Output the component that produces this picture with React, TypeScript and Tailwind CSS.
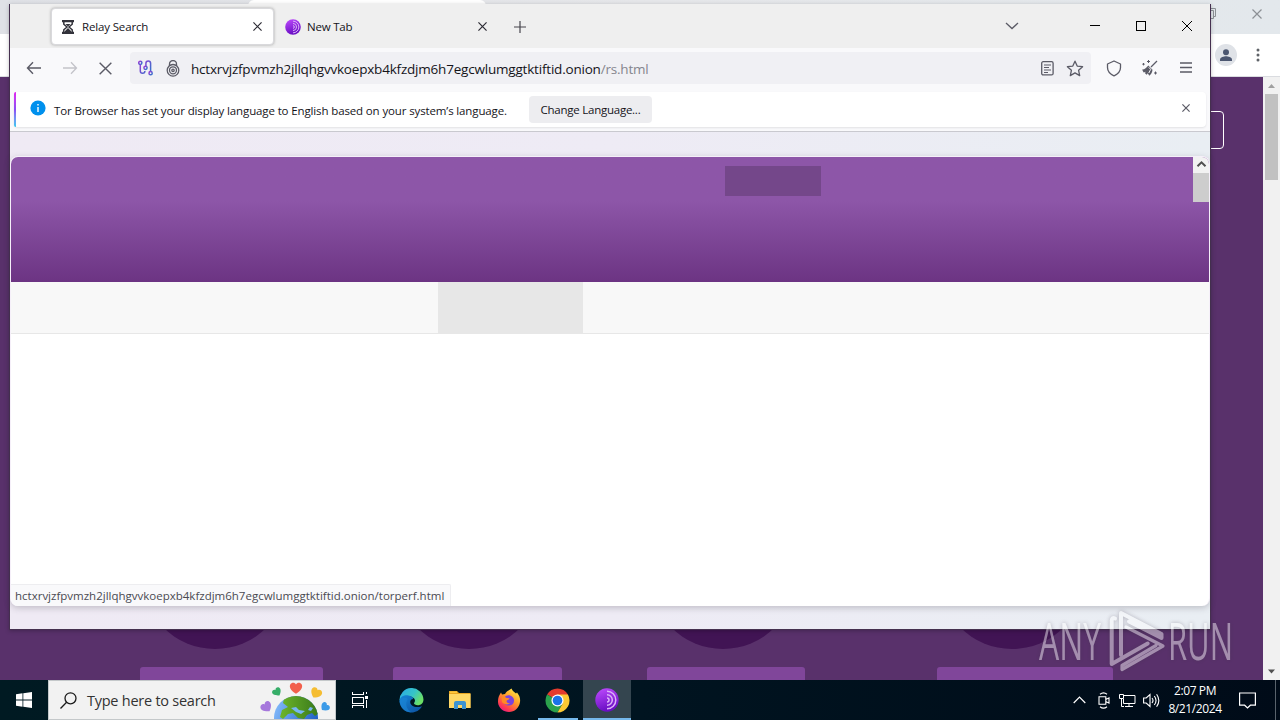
import React from "react";

function TorIcon({ size, id }: { size: number; id: string }) {
  return (
    <svg width={size} height={size} viewBox="0 0 24 24" className="block shrink-0">
      <defs>
        <linearGradient id={id} x1="0" y1="0" x2="0.3" y2="1">
          <stop offset="0" stopColor="#c04cff" />
          <stop offset="1" stopColor="#6a0fc4" />
        </linearGradient>
      </defs>
      <circle cx="12" cy="12" r="11.7" fill={`url(#${id})`} />
      <path d="M12 3.2a8.8 8.8 0 0 1 0 17.6M12 6.7a5.3 5.3 0 0 1 0 10.6M12 10a2 2 0 0 1 0 4" fill="none" stroke="#dcb2f8" strokeWidth="1.5" />
    </svg>
  );
}

function Cross({ size, color, width = 1.2 }: { size: number; color: string; width?: number }) {
  return (
    <svg width={size} height={size} viewBox="0 0 10 10" className="block shrink-0">
      <path d="M.5.5l9 9M9.5.5l-9 9" stroke={color} strokeWidth={(width * 10) / size} fill="none" />
    </svg>
  );
}

function TabBar() {
  return (
    <div className="flex h-[44px] shrink-0 items-start bg-[#efefef] pl-[41px] text-[12px] text-[#15141a]">
      <div className="mt-[4px] flex h-[37px] w-[223px] items-center rounded-[4px] border border-[#d9d9dc] bg-white pr-[11px] pl-[10px] shadow-[0_0_3px_rgba(0,0,0,0.3)]">
        <svg width="12" height="14" viewBox="0 0 12 14" className="shrink-0">
          <path d="M0 1.2h12M0 12.8h12" stroke="#33333b" strokeWidth="2.2" />
          <path d="M1.8 2v2.2L5 7 1.8 9.8V12M10.2 2v2.2L7 7l3.2 2.8V12" fill="none" stroke="#33333b" strokeWidth="1.5" />
          <path d="M3.5 4h5L6 6.500zM6 8l3 3v1H3v-1z" fill="#33333b" />
        </svg>
        <span className="ml-[8px] flex-1 text-[11.5px] tracking-[-0.15px]">Relay Search</span>
        <Cross size={9} color="#2b2a33" />
      </div>
      <div className="mt-[4px] flex h-[37px] w-[223px] items-center pr-[10px] pl-[11px]">
        <TorIcon size={16} id="tabTor" />
        <span className="ml-[6px] flex-1 text-[11.5px] tracking-[-0.2px]">New Tab</span>
        <Cross size={9} color="#2b2a33" />
      </div>
      <svg width="12" height="12" viewBox="0 0 12 12" className="mt-[17px] ml-[17px]">
        <path d="M6 0v12M0 6h12" stroke="#46454d" strokeWidth="1.2" />
      </svg>
      <div className="flex-1" />
      <svg width="14" height="8" viewBox="0 0 14 8" className="mt-[18px]">
        <path d="M1 1l6 5.500L13 1" fill="none" stroke="#5b5b66" strokeWidth="1.3" />
      </svg>
      <svg width="11" height="11" viewBox="0 0 11 11" shapeRendering="crispEdges" className="mt-[16px] ml-[71px]">
        <path d="M0 5.500h10" stroke="#000" />
      </svg>
      <svg width="11" height="11" viewBox="0 0 11 11" shapeRendering="crispEdges" className="mt-[17px] ml-[35px]">
        <rect x=".5" y=".5" width="9" height="9" fill="none" stroke="#000" />
      </svg>
      <svg width="10" height="10" viewBox="0 0 10 10" className="mt-[17px] mr-[18px] ml-[35px]">
        <path d="M0 0l10 10M10 0L0 10" stroke="#000" strokeWidth="1" />
      </svg>
    </div>
  );
}

function Toolbar() {
  return (
    <div className="flex h-[44px] shrink-0 items-center bg-[#f9f9fb] pb-[4px]">
      <svg width="16" height="14" viewBox="0 0 16 14" className="ml-[16px]">
        <path d="M15 7H1.500M7 1.200L1.500 7 7 12.800" fill="none" stroke="#5b5b66" strokeWidth="1.4" />
      </svg>
      <svg width="16" height="14" viewBox="0 0 16 14" className="ml-[20px]">
        <path d="M1 7h13.500M9 1.200L14.500 7 9 12.800" fill="none" stroke="#c3c3c9" strokeWidth="1.300" />
      </svg>
      <div className="ml-[21px]"><Cross size={13} color="#5b5b66" width={1.4} /></div>
      <div className="ml-[18px] flex h-[32px] w-[961px] items-center rounded-[4px] bg-[#f0f0f4] pr-[7px] pl-[8px]">
        <svg width="15" height="16" viewBox="0 0 15 16" className="shrink-0">
          <defs>
            <linearGradient id="circuit" x1="0" y1="0" x2="1" y2="1">
              <stop offset="0" stopColor="#a338d8" />
              <stop offset="1" stopColor="#2878c8" />
            </linearGradient>
          </defs>
          <g fill="none" stroke="url(#circuit)" strokeWidth="1.5">
            <circle cx="2.300" cy="2.800" r="1.600" />
            <path d="M2.300 4.400V11a2.300 2.300 0 0 0 4.600 0M7.900 6.300V3.300a2.300 2.300 0 0 1 4.700 0v8.200" />
            <circle cx="7.500" cy="7.800" r="1.600" />
            <path d="M7.200 9.400V11" />
            <circle cx="12.600" cy="13.200" r="1.600" />
          </g>
        </svg>
        <svg width="14" height="17" viewBox="0 0 14 17" className="ml-[13px] shrink-0">
          <g fill="none" stroke="#5b5b66" strokeWidth="1.3">
            <path d="M3.500 6V4a3.500 3.500 0 0 1 7 0v2" />
            <circle cx="7" cy="10.300" r="5.800" />
            <circle cx="7" cy="10.300" r="3.500" />
            <circle cx="7" cy="10.300" r="1.200" />
          </g>
        </svg>
        <span className="mt-[2px] ml-[11px] flex-1 text-[13.5px] tracking-[-0.2px] whitespace-nowrap text-[#15141a]">
          <span>hctxrvjzfpvmzh2jllqhgvvkoepxb4kfzdjm6h7egcwlumggtktiftid.onion</span>
          <span className="text-[#85858e]">/rs.html</span>
        </span>
        <svg width="13" height="15" viewBox="0 0 13 15" className="shrink-0">
          <rect x=".7" y=".7" width="11.400" height="13.200" rx="1.500" fill="none" stroke="#5b5b66" strokeWidth="1.300" />
          <path d="M3 4h7M3 6.500h5M3 9h7M3 11.500h4" stroke="#5b5b66" strokeWidth="1" />
        </svg>
        <svg width="18" height="17" viewBox="0 0 18 17" className="ml-[12px] shrink-0">
          <path d="M9 1.200l2.200 4.900 5.400.6-4 3.600 1.100 5.300L9 12.900l-4.700 2.700 1.100-5.300-4-3.600 5.400-.6z" fill="none" stroke="#5b5b66" strokeWidth="1.300" strokeLinejoin="round" />
        </svg>
      </div>
      <svg width="16" height="17" viewBox="0 0 16 17" className="ml-[15px]">
        <path d="M8 1l6.500 3v3.500c0 4-2.500 6.500-6.500 8.300C4 14 1.500 11.500 1.500 7.500V4z" fill="none" stroke="#5b5b66" strokeWidth="1.300" strokeLinejoin="round" />
      </svg>
      <svg width="17" height="17" viewBox="0 0 17 17" className="ml-[19px]">
        <path d="M16 1l-6 6" stroke="#5b5b66" strokeWidth="1.300" />
        <path d="M7.300 5.500l4.200 4.200c-.2 3-1.700 5-3.300 6-.6-1.300-1-2-1.500-2.500l-.9 1.500c-.7-.4-1.400-1-1.900-1.700l1-1.300-2.200.8C2 11.500 1.500 10.600 1.200 9.500c2.600.1 4.300-2 6.100-4z" fill="#5b5b66" />
        <path d="M7.800 7.400l1.900 1.900-1.900 3.700" fill="none" stroke="#f9f9fb" strokeWidth="1" />
        <path d="M7.500 0v3M6 1.500h3M2.500 3v2.400M1.300 4.200h2.400M14.500 11.500v3M13 13h3" stroke="#5b5b66" strokeWidth="1" />
      </svg>
      <svg width="12" height="12" viewBox="0 0 12 12" className="ml-[22px]">
        <path d="M0 1h12M0 5.500h12M0 10h12" stroke="#5b5b66" strokeWidth="1.300" />
      </svg>
    </div>
  );
}

function Notification() {
  return (
    <div className="flex h-[40px] shrink-0 border-b border-[#c9c9cf] bg-[#f9f9fb] px-[4px]">
      <div className="flex h-[35px] flex-1 items-center rounded-[4px] bg-white shadow-[0_1px_2px_rgba(58,57,68,0.12)]">
        <div className="h-full w-[2px] rounded-l bg-linear-to-b from-[#e01cf0] via-[#8a4cf5] to-[#22c8f0]" />
        <svg width="16" height="16" viewBox="0 0 16 16" className="mb-[4px] ml-[14px]">
          <circle cx="8" cy="8" r="7.600" fill="#0090ed" />
          <path d="M8 7v5M8 4v1.600" stroke="#fff" strokeWidth="1.400" />
        </svg>
        <span className="mt-[2px] ml-[8px] w-[475px] text-[11.5px] tracking-[-0.13px] whitespace-nowrap text-[#15141a]">
          Tor Browser has set your display language to English based on your system’s language.
        </span>
        <button className="flex h-[27px] w-[123px] items-center justify-center rounded-[4px] bg-[#ededf0] pt-px text-[11.5px] tracking-[-0.25px] whitespace-nowrap text-[#15141a]">
          Change Language...
        </button>
        <div className="flex-1" />
        <div className="mr-[16px] mb-[3px]"><Cross size={8} color="#5b5b66" /></div>
      </div>
    </div>
  );
}

function RelayPage() {
  return (
    <div className="flex h-[450px] shrink-0 flex-col overflow-hidden rounded-[8px] border-x border-t border-[#f5eff9] bg-white shadow-[0_2px_6px_rgba(58,57,68,0.25)]">
      <div className="flex h-[125px] shrink-0 items-start justify-end bg-linear-to-b from-[#8d56a8] from-35% to-[#6c3483]">
        <div className="mt-[9px] mr-[372px] h-[30px] w-[96px] bg-[#74478a]" />
        <div className="flex h-[45px] w-[16px] flex-col bg-[#f2f2f2]">
          <svg width="16" height="16" viewBox="0 0 16 16" className="shrink-0">
            <path d="M4.500 9.300L8.500 5.300l4 4" fill="none" stroke="#505050" strokeWidth="2" />
          </svg>
          <div className="flex-1 bg-[#cdcdcd]" />
        </div>
      </div>
      <div className="flex h-[52px] shrink-0 border-b border-[#e7e7e7] bg-[#f8f8f8] pl-[427px]">
        <div className="w-[145px] bg-[#e7e7e7]" />
      </div>
      <div className="flex-1" />
      <div className="flex h-[22px] w-[440px] shrink-0 items-center rounded-tr-[2px] border-t border-r border-[#ededf0] bg-[#f9f9fb] pl-[4px] text-[11.5px] whitespace-nowrap text-[#4a4a52]">
        hctxrvjzfpvmzh2jllqhgvvkoepxb4kfzdjm6h7egcwlumggtktiftid.onion/torperf.html
      </div>
    </div>
  );
}

function TorWindow() {
  return (
    <div className="absolute top-[4px] left-[9px] flex h-[626px] w-[1202px] flex-col border-x border-b border-[#45304f] bg-linear-to-r from-[#efeaf4] via-[#eeebf5] to-[#e9eef3] shadow-[0_1px_4px_rgba(0,0,0,0.25)]">
      <TabBar />
      <Toolbar />
      <Notification />
      <div className="h-[24px] shrink-0" />
      <RelayPage />
    </div>
  );
}

function ChromeWindow() {
  return (
    <div className="flex h-[680px] flex-col">
      <div className="flex h-[34px] shrink-0 items-start bg-linear-to-r from-[#dfe1e6] via-[#e6e7ea] to-[#e3e8ec]">
        <div className="ml-[248px] h-[34px] w-[238px] rounded-t-[6px] bg-white" />
        <div className="flex-1" />
        <svg width="11" height="11" viewBox="0 0 11 11" className="mt-[8px]">
          <path d="M2.500 2.500v-2h8v8h-2M.5 2.500h8v8h-8z" fill="none" stroke="#8c9095" />
        </svg>
        <div className="mt-[9px] mr-[18px] ml-[36px]"><Cross size={10} color="#8c9095" /></div>
      </div>
      <div className="flex h-[43px] shrink-0 items-center justify-end border-b border-[#dadce0] bg-white">
        <svg width="22" height="22" viewBox="0 0 22 22">
          <circle cx="11" cy="11" r="11" fill="#dfe2e7" />
          <circle cx="11" cy="8.200" r="3" fill="#4b5670" />
          <path d="M5 17v-1.500c0-2.200 4-3.200 6-3.200s6 1 6 3.200V17z" fill="#4b5670" />
        </svg>
        <svg width="4" height="14" viewBox="0 0 4 14" className="mr-[20px] ml-[19px]">
          <circle cx="2" cy="2" r="1.500" fill="#5f6368" />
          <circle cx="2" cy="7" r="1.500" fill="#5f6368" />
          <circle cx="2" cy="12" r="1.500" fill="#5f6368" />
        </svg>
      </div>
      <div className="flex flex-1">
        <div className="flex flex-1 flex-col overflow-hidden bg-[#59316b]">
          <div className="mt-[34px] mr-[39px] h-[38px] w-[90px] self-end rounded-[4px] border border-white" />
          <div className="h-[411px]" />
          <div className="flex h-[89px] pl-[142px]">
            <div className="w-[146px] rounded-b-full bg-[#411454]" />
            <div className="ml-[108px] w-[146px] rounded-b-full bg-[#411454]" />
            <div className="ml-[108px] w-[146px] rounded-b-full bg-[#411454]" />
            <div className="ml-[143px] w-[146px] rounded-b-full bg-[#411454]" />
          </div>
          <div className="mt-[18px] flex h-[13px] pl-[140px]">
            <div className="w-[183px] rounded-t-[3px] bg-[#80469a]" />
            <div className="ml-[70px] w-[169px] rounded-t-[3px] bg-[#80469a]" />
            <div className="ml-[85px] w-[158px] rounded-t-[3px] bg-[#80469a]" />
            <div className="ml-[132px] w-[176px] rounded-t-[3px] bg-[#80469a]" />
          </div>
        </div>
        <div className="flex w-[17px] flex-col items-center bg-[#f1f1f1]">
          <svg width="17" height="17" viewBox="0 0 17 17"><path d="M5 11l3.500-4 3.500 4z" fill="#a0a0a0" /></svg>
          <div className="h-[86px] w-[13px] bg-[#c1c1c1]" />
          <div className="flex-1" />
          <svg width="17" height="17" viewBox="0 0 17 17"><path d="M5 6.500l3.500 4 3.500-4z" fill="#505050" /></svg>
        </div>
      </div>
    </div>
  );
}

function Watermark() {
  return (
    <div className="absolute top-[609px] left-[1034px] opacity-45 drop-shadow-[0_0_2px_rgba(60,50,70,0.7)]">
      <svg width="210" height="64" viewBox="-4 0 210 64" className="block">
        <g fill="none" stroke="#fff" strokeWidth="4" strokeLinejoin="round" strokeLinecap="round">
          <path d="M83 46V4l40.500 21v4L91 12.500" />
          <path d="M77 9.500q-3-1.500-3.300 2V55l36-20.500" />
          <path d="M88 18l37 19L84 60.500v-4l34-20" strokeWidth="3.200" />
        </g>
        <g fill="#fff" fontFamily="Open Sans, sans-serif" fontWeight="400" fontSize="52">
          <text x="1" y="51" textLength="62" lengthAdjust="spacingAndGlyphs">ANY</text>
          <text x="130" y="51" textLength="65" lengthAdjust="spacingAndGlyphs">RUN</text>
        </g>
      </svg>
    </div>
  );
}

function HeartGlobe() {
  const heart = "M0 5C-5 2-6-1-5-3c1.200-2 4-2 5 0 1-2 3.800-2 5 0C6-1 5 2 0 5z";
  return (
    <svg width="74" height="38" viewBox="0 0 74 38" className="block shrink-0">
      <defs>
        <linearGradient id="sea" x1="0" y1="0" x2="1" y2="0.4">
          <stop offset="0" stopColor="#8cc2ff" />
          <stop offset="1" stopColor="#2463c8" />
        </linearGradient>
        <linearGradient id="land" x1="0" y1="0" x2="1" y2="0">
          <stop offset="0" stopColor="#6db52a" />
          <stop offset="1" stopColor="#38781b" />
        </linearGradient>
        <clipPath id="globe"><circle cx="36" cy="37" r="22" /></clipPath>
      </defs>
      <circle cx="36" cy="37" r="22" fill="url(#sea)" />
      <g clipPath="url(#globe)" fill="url(#land)">
        <path d="M24 18l8-4h14l9 7 4 11-4 3-3-3-5 2-3 4-6-1-5-5-5 1-5 5-3-2 2-7 6-3-5-4z" />
      </g>
      <path d="M31 27l5-1 3 3 6 1-4 3-5-2zM50 26l3 1-2 3-3-1z" fill="#77b7f2" />
      <path d={heart} transform="translate(36 7) scale(1.150)" fill="#f2604c" />
      <path d={heart} transform="translate(17 11) rotate(-35) scale(.85)" fill="#36ad68" />
      <path d={heart} transform="translate(56 12) rotate(30) scale(1.050)" fill="#f5bd32" />
      <path d={heart} transform="translate(6.500 26) rotate(-35) scale(1.050)" fill="#a678dc" />
      <path d={heart} transform="translate(65 26) rotate(45) scale(.85)" fill="#3c9be8" />
    </svg>
  );
}

function EdgeIcon() {
  return (
    <svg width="25" height="25" viewBox="0 0 24 24">
      <defs>
        <linearGradient id="edgeTop" x1="0" y1="0" x2="1" y2="0.5">
          <stop offset="0" stopColor="#2aa9e8" />
          <stop offset="0.6" stopColor="#36c4c8" />
          <stop offset="1" stopColor="#6be067" />
        </linearGradient>
        <linearGradient id="edgeLow" x1="0" y1="0" x2="1" y2="1">
          <stop offset="0" stopColor="#1687d9" />
          <stop offset="1" stopColor="#0c4f9e" />
        </linearGradient>
      </defs>
      <path d="M.5 12A11.500 11.500 0 0 1 23.500 11c0 3.500-2.500 5.500-5.500 5.500-2.500 0-4-1-3.500-2.200 1.500-1.800 1-4.300-1.500-5.300C9 6.500 3 8 .5 12z" fill="url(#edgeTop)" />
      <path d="M.5 12.500C1 8.500 4.500 6.500 8 7c3 .3 5.500 1.800 5.700 3.500-2 0-3.200 1.500-2.900 3.500.5 3.500 5 5.500 11.200 3.500-2 4-6 6-10 6A11.500 11.500 0 0 1 .5 12.500z" fill="url(#edgeLow)" />
      <path d="M8.500 10.500c-3 4-1.500 10 3.500 12.900C5.500 23.500 1 18.500.5 12.500 2.500 9 6 8.500 8.500 10.500z" fill="#1c86d6" fillOpacity="0.6" />
    </svg>
  );
}

function FolderIcon() {
  return (
    <svg width="22" height="20" viewBox="0 0 22 20">
      <path d="M0 1h8l2 2h11.500v15H0z" fill="#e8a622" />
      <path d="M0 4h21.500v14H0z" fill="#ffd866" />
      <path d="M5 19v-6q0-2 2-2h8q2 0 2 2v6h-4v-4H9v4H5z" fill="#3e94d1" />
      <path d="M1 1.500h7V3H1z" fill="#ffc83c" />
    </svg>
  );
}

function FirefoxIcon() {
  return (
    <svg width="24" height="25" viewBox="0 0 24 25">
      <defs>
        <linearGradient id="fox" x1="0.85" y1="0" x2="0.2" y2="1">
          <stop offset="0" stopColor="#fff04a" />
          <stop offset="0.45" stopColor="#ff9a28" />
          <stop offset="0.8" stopColor="#ff3b50" />
          <stop offset="1" stopColor="#e3158b" />
        </linearGradient>
      </defs>
      <path d="M14.500.5c1 2.500 3 3.500 4.500 5l1-1c2.500 3 3.500 6 3 9.500-.8 6-5.500 10-11 10S1.200 20 1 14c-.1-3.500.8-6.500 3-9.500L5 6.500 8 6c1.500-3 4-3.500 6.500-5.500z" fill="url(#fox)" />
      <path d="M7.500 9.500C9 7 13 6.500 15.500 9c3 3 1.500 8-3 8.500-4 .3-6-2-6-4.500z" fill="#7a42dd" />
      <path d="M4.500 8.500c2 0 4 .5 5 1.500l3 .3c0 1.500-2.500 1.600-3 2.700 0 1.500 1.500 2.500 3.500 2-2 2.500-6 1.500-8-1z" fill="#ff8a24" />
    </svg>
  );
}

function ChromeIcon() {
  return (
    <svg width="25" height="25" viewBox="0 0 24 24">
      <path d="M12 12L2 6.200A11.600 11.600 0 0 1 22 6.200z" fill="#e33b2e" />
      <path d="M2 6.200A11.600 11.600 0 0 0 12 23.600l5-8.700-5-2.900z" fill="#2ba24c" />
      <path d="M12 23.600A11.600 11.600 0 0 0 22 6.200H12V12l5 2.900z" fill="#fcc934" />
      <circle cx="12" cy="12" r="5.800" fill="#fff" />
      <circle cx="12" cy="12" r="4.600" fill="#1a73e8" />
    </svg>
  );
}

function Taskbar() {
  return (
    <div className="flex h-[40px] bg-linear-to-r from-[#001a22] via-[#001420] to-[#000b18] text-white">
      <div className="flex w-[48px] items-center justify-center">
        <svg width="16" height="16" viewBox="0 0 16 16">
          <path d="M0 2.200l6.500-.9v6.300H0zM7.300 1.200L16 0v7.600H7.300zM0 8.400h6.500v6.300L0 13.800zM7.300 8.400H16V16l-8.700-1.200z" fill="#fff" />
        </svg>
      </div>
      <div className="flex w-[288px] items-center border border-[#c4c8ca] bg-[#f2f2f2] pl-[11px]">
        <svg width="17" height="17" viewBox="0 0 17 17">
          <circle cx="10.500" cy="6.300" r="5.500" fill="none" stroke="#1b1b1b" strokeWidth="1.300" />
          <path d="M6.600 10.300L.5 16.500" stroke="#1b1b1b" strokeWidth="1.300" />
        </svg>
        <span className="mt-px ml-[10px] w-[173px] text-[14.5px] tracking-[-0.25px] whitespace-nowrap text-[#333]">Type here to search</span>
        <HeartGlobe />
      </div>
      <div className="flex w-[48px] items-center justify-center">
        <svg width="17" height="16" viewBox="0 0 17 16" shapeRendering="crispEdges">
          <path d="M.5 0v3M11.500 0v3M0 2.500h12M.5 5.500h11v6H.5zM0 13.500h12M.5 13v3M11.500 13v3M14.500 0v2M14.500 8v8" fill="none" stroke="#fff" />
          <rect x="13" y="4" width="3" height="3" fill="#fff" />
        </svg>
      </div>
      <div className="ml-[2px] flex w-[50px] items-center justify-center"><EdgeIcon /></div>
      <div className="flex w-[48px] items-center justify-center"><FolderIcon /></div>
      <div className="flex w-[49px] items-center justify-center"><FirefoxIcon /></div>
      <div className="flex w-[48px] items-center justify-center bg-[linear-gradient(to_right,transparent_5px,#76b9ed_5px,#76b9ed_45px,transparent_45px)] bg-[length:100%_2px] bg-bottom bg-no-repeat"><ChromeIcon /></div>
      <div className="ml-[2px] flex w-[48px] items-center justify-center bg-[#34454f] shadow-[inset_0_-2px_#76b9ed]"><TorIcon size={24} id="barTor" /></div>
      <div className="flex-1" />
      <div className="flex items-center">
        <svg width="13" height="8" viewBox="0 0 13 8"><path d="M.7 7L6.500 1.200 12.300 7" fill="none" stroke="#fff" strokeWidth="1.200" /></svg>
        <svg width="12" height="17" viewBox="0 0 12 17" className="ml-[12px]">
          <path d="M1 4.800h6.800v7.400H1zM7.800 7.500L11 5.800v5.400L7.800 9.500M2 2.300Q5.500-.5 9 2.300M2 14.700q3.500 2.800 7 0" fill="none" stroke="#fff" strokeWidth="1.100" />
        </svg>
        <svg width="17" height="15" viewBox="0 0 17 15" className="ml-[9px]">
          <path d="M5 2.500h11v8H4.500V6M10 10.500V13M6 13.500h8M.5 1.500h4v4h-4zM2.500 5.500v8H5" fill="none" stroke="#fff" strokeWidth="1" />
        </svg>
        <svg width="17" height="15" viewBox="0 0 17 15" className="ml-[7px]">
          <path d="M.6 5v5h2.600L7 13.500v-12L3.200 5zM9 5q2 2.500 0 5M11.300 3q3.500 4.500 0 9M13.600 1.200q4.500 6.300 0 12.600" fill="none" stroke="#fff" strokeWidth="1.100" />
        </svg>
      </div>
      <div className="ml-[5px] flex w-[60px] flex-col items-center pt-[2px] text-[12px] leading-[18px] tracking-[-0.4px]">
        <span>2:07 PM</span>
        <span>8/21/2024</span>
      </div>
      <svg width="17" height="17" viewBox="0 0 17 17" className="mt-[12px] ml-[14px]">
        <path d="M.6 1h15.800v12.200h-5L8.500 16l-2.900-2.800h-5z" fill="none" stroke="#fff" strokeWidth="1.200" />
      </svg>
      <div className="ml-[19px] w-[5px] border-l border-[#59636c]" />
    </div>
  );
}

export default function App() {
  return (
    <div className="relative h-[720px] w-[1280px] overflow-hidden font-['Open_Sans','Noto_Sans',sans-serif]">
      <ChromeWindow />
      <TorWindow />
      <Watermark />
      <Taskbar />
    </div>
  );
}
